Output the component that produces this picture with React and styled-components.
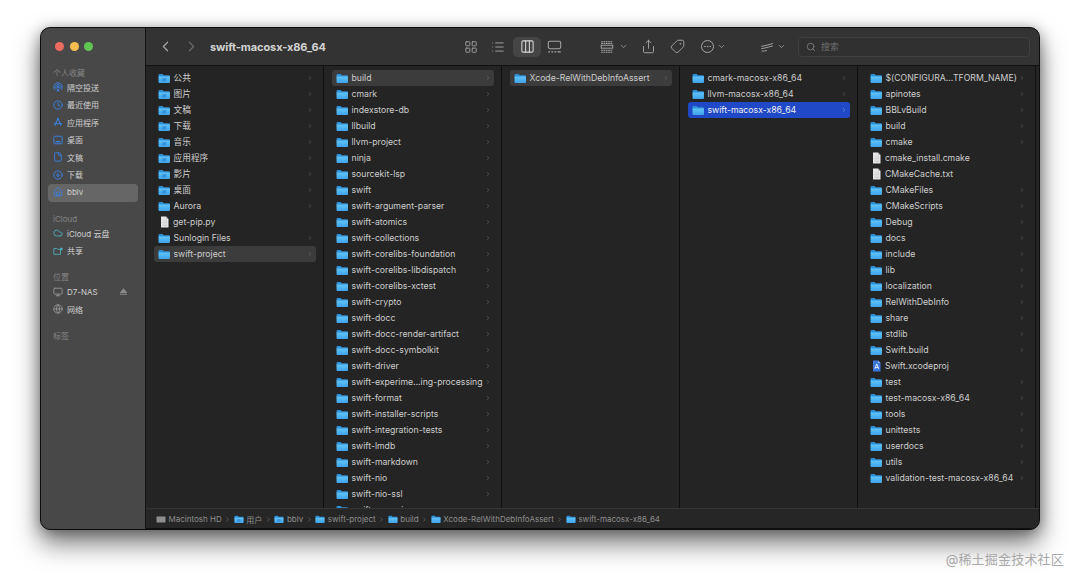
import React from "react";
import styled, { createGlobalStyle } from "styled-components";
import {
  ChevronLeft,
  ChevronRight,
  ChevronDown,
  Clock,
  File as FileIcon,
  CircleArrowDown,
  House,
  Cloud,
  Monitor,
  Globe,
  LayoutGrid,
  List,
  Columns3,
  Share,
  Tag,
  Ellipsis,
  Search,
} from "lucide-react";

const GlobalStyle = createGlobalStyle`
  html, body {
    margin: 0;
    padding: 0;
    background: #fff;
    overflow: hidden;
  }
  * { box-sizing: border-box; }
`;

const FONT = `Inter, "Noto Sans CJK SC", sans-serif`;

const Page = styled.div`
  width: 1080px;
  height: 583px;
  padding: 27px 0 0 40px;
  display: flex;
  flex-direction: column;
  background: #fff;
  font-family: ${FONT};
`;

const Window = styled.div`
  width: 1000px;
  height: 503px;
  flex: none;
  display: flex;
  border-radius: 10px;
  border: 1px solid #0d0d0d;
  overflow: hidden;
  background: #242424;
  box-shadow: 0 14px 26px rgba(0, 0, 0, 0.5), 0 2px 14px rgba(0, 0, 0, 0.35);
`;

const Watermark = styled.div`
  align-self: flex-end;
  margin: 21px 16px 0 0;
  font-size: 13px;
  line-height: 16px;
  letter-spacing: 0.2px;
  color: #a9a9a9;
  white-space: nowrap;
`;

const Sidebar = styled.aside`
  width: 105px;
  flex: none;
  background: #484848;
  border-right: 1px solid #141414;
`;

const Lights = styled.div`
  height: 39.5px;
  padding: 13.5px 0 0 14px;
  display: flex;
  gap: 5.5px;
`;

const Light = styled.span`
  width: 9px;
  height: 9px;
  border-radius: 50%;
  background: ${(p) => p.$color};
`;

const Section = styled.section`
  margin-bottom: 12px;
`;

const SectionTitle = styled.div`
  height: 11.5px;
  padding-left: 12px;
  font-size: 8px;
  line-height: 10px;
  color: #858585;
`;

const SideItem = styled.div`
  height: 17.5px;
  margin: 0 7px;
  padding: 0 5px 1px 5px;
  display: flex;
  align-items: center;
  gap: 4px;
  font-size: 8px;
  color: #d0d0d0;
  border-radius: 4px;
  background: ${(p) => (p.$active ? "#666666" : "transparent")};
  svg {
    width: 10px;
    height: 10px;
    flex: none;
    color: ${(p) => p.$iconColor || "#3a82e6"};
  }
`;

const Eject = styled.span`
  margin-left: auto;
  margin-right: 6px;
  width: 7px;
  height: 7px;
  flex: none;
  background: #8a8a8a;
  clip-path: polygon(50% 0, 100% 62%, 100% 72%, 0 72%, 0 62%, 0 100%, 100% 100%, 100% 84%, 0 84%, 0 62%);
`;

const Main = styled.div`
  flex: 1;
  min-width: 0;
  display: flex;
  flex-direction: column;
`;

const Toolbar = styled.header`
  height: 38px;
  flex: none;
  display: flex;
  align-items: center;
  background: #333333;
  border-bottom: 1px solid #111;
  color: #a6a6a6;
`;

const Slot = styled.div`
  width: ${(p) => p.$w}px;
  height: 20px;
  margin-left: ${(p) => p.$ml || 0}px;
  flex: none;
  display: flex;
  align-items: center;
  justify-content: center;
  gap: ${(p) => p.$gap || 0}px;
  border-radius: 5px;
  color: ${(p) => (p.$dim ? "#6a6a6a" : "#a6a6a6")};
  background: ${(p) => (p.$active ? "#454545" : "transparent")};
`;

const Title = styled.div`
  width: 246px;
  margin-left: 6px;
  flex: none;
  font-size: 11px;
  font-weight: 700;
  color: #d2d2d2;
  letter-spacing: -0.1px;
  white-space: nowrap;
`;

const TagIcon = styled(Tag)`
  transform: rotate(90deg);
`;

const MoreRing = styled.span`
  width: 13px;
  height: 13px;
  display: flex;
  align-items: center;
  justify-content: center;
  border: 1.2px solid currentColor;
  border-radius: 50%;
`;

const SearchBox = styled.div`
  width: 232px;
  height: 20px;
  margin-left: 8px;
  padding-left: 7px;
  flex: none;
  display: flex;
  align-items: center;
  gap: 5px;
  font-size: 9px;
  color: #6f6f6f;
  border: 1px solid #3f3f3f;
  border-radius: 4px;
  background: #303030;
`;

const Browser = styled.div`
  flex: 1;
  min-height: 0;
  display: flex;
  overflow: hidden;
  background: #242424;
`;

const Column = styled.div`
  width: 178px;
  flex: none;
  padding: 4px 7px 0 8px;
  overflow: hidden;
  border-right: 1px solid #0f0f0f;
`;

const Row = styled.div`
  height: 16px;
  padding: 0 3.5px 0 4px;
  display: flex;
  align-items: center;
  gap: 3px;
  font-size: 8.7px;
  color: ${(p) => (p.$state === "blue" ? "#f0f0f0" : "#cdcdcd")};
  border-radius: 3px;
  white-space: nowrap;
  background: ${(p) =>
    p.$state === "blue" ? "#1f49c7" : p.$state === "gray" ? "#3c3c3c" : "transparent"};
`;

const RowName = styled.span`
  flex: 1;
  min-width: 0;
  margin-top: ${(p) => (p.$cjk ? "-1px" : "0")};
`;

const RowArrow = styled.span`
  width: 6px;
  display: flex;
  justify-content: center;
  flex: none;
  color: ${(p) => (p.$light ? "#c4cdea" : "#858585")};
`;

const StatusBar = styled.footer`
  height: 21px;
  flex: none;
  padding-left: 10px;
  display: flex;
  align-items: center;
  background: #262626;
  border-top: 1px solid #343434;
  box-shadow: inset 0 -1px 0 #0f0f0f;
`;

const Crumb = styled.span`
  display: flex;
  align-items: center;
  gap: 2.5px;
  font-size: 8px;
  color: #8e8e8e;
  white-space: nowrap;
`;

const CrumbSep = styled.span`
  width: 12.1px;
  display: flex;
  justify-content: center;
  color: #7c7c7c;
`;

const Defs = styled.svg`
  position: absolute;
  width: 0;
  height: 0;
`;

const FolderSvg = styled.svg`
  flex: none;
`;

const DocSvg = styled.svg`
  flex: none;
  margin-left: 1px;
`;

function Folder({ size = 12.5, glyph }) {
  return (
    <FolderSvg width={size} height={size * 0.84} viewBox="0 0 24 20">
      <path d="M1 4.5C1 2.8 2 2 3.5 2H9l2 2h9.5C22 4 23 5 23 6.5V8H1z" fill="#2f90da" />
      <path d="M1 6.5h22v10.7c0 1.3-1 2.3-2.3 2.3H3.3C2 19.5 1 18.5 1 17.2z" fill="url(#folderFill)" />
      {glyph && <rect x="8" y="10" width="8" height="6" rx="1" fill="#3592d8" />}
    </FolderSvg>
  );
}

function Doc({ blue }) {
  return (
    <DocSvg width="11" height="12" viewBox="0 0 20 24">
      <path d="M3 1h10l5 5v17H3z" fill={blue ? "#3b76dc" : "#e6e6e6"} />
      <path d="M13 1v5h5z" fill={blue ? "#8fb4f0" : "#b5b5b5"} />
      {blue ? (
        <path d="M10.5 8l-4 10M10.5 8l4 10M7.5 15h6" stroke="#fff" strokeWidth="1.6" fill="none" />
      ) : (
        <path d="M6 10h9M6 13h9M6 16h9M6 19h9" stroke="#bcbcbc" strokeWidth="1" />
      )}
    </DocSvg>
  );
}

function AirDrop() {
  return (
    <svg viewBox="0 0 24 24" fill="none" stroke="currentColor" strokeWidth="2.4">
      <path d="M5 19a10 10 0 1 1 14 0" />
      <path d="M8.5 16a5.5 5.5 0 1 1 7 0" />
      <circle cx="12" cy="12" r="1.8" fill="currentColor" />
      <path d="M12 15l-4 7h8z" fill="currentColor" stroke="none" />
    </svg>
  );
}

function AppsIcon() {
  return (
    <svg viewBox="0 0 24 24" fill="none" stroke="currentColor" strokeWidth="2.6" strokeLinecap="round">
      <path d="M12 3l-7 17M12 3l7 17M3 16h18" />
    </svg>
  );
}

function DesktopIcon() {
  return (
    <svg viewBox="0 0 24 24" fill="none" stroke="currentColor" strokeWidth="2.2">
      <rect x="2" y="3" width="20" height="18" rx="2" />
      <path d="M6 16h12" strokeWidth="3" />
    </svg>
  );
}

function SharedIcon() {
  return (
    <svg viewBox="0 0 24 24" fill="none" stroke="currentColor" strokeWidth="2">
      <path d="M2 6h7l2 2h7v12H2z" />
      <circle cx="20" cy="7" r="2.5" fill="currentColor" />
    </svg>
  );
}

function GalleryIcon() {
  return (
    <svg width="15" height="13" viewBox="0 0 24 21" fill="none" stroke="currentColor" strokeWidth="1.7">
      <rect x="2" y="2" width="20" height="12" rx="2.5" />
      <path d="M2 19h3M7 19h3M12 19h3M17 19h5" strokeWidth="2" />
    </svg>
  );
}

function GroupIcon() {
  return (
    <svg width="14" height="14" viewBox="0 0 24 24" fill="none" stroke="currentColor" strokeWidth="1.6">
      <path d="M2 3h20M2 6h20" strokeDasharray="3 1" strokeWidth="2" />
      <rect x="2" y="9" width="20" height="5" />
      <path d="M2 17.5h20M2 21h20" strokeDasharray="3 1" strokeWidth="2" />
    </svg>
  );
}

function SwooshIcon() {
  return (
    <svg width="14" height="10" viewBox="0 0 24 16" fill="none" stroke="currentColor" strokeWidth="1.6">
      <path d="M2 7c6-1 14-3 20-5" />
      <path d="M2 11c6-1 14-3 20-5" />
      <path d="M12 14c-3 1-6 1-9 1" />
    </svg>
  );
}

const favorites = [
  { label: "隔空投送", Icon: AirDrop },
  { label: "最近使用", Icon: Clock },
  { label: "应用程序", Icon: AppsIcon },
  { label: "桌面", Icon: DesktopIcon },
  { label: "文稿", Icon: FileIcon },
  { label: "下载", Icon: CircleArrowDown },
  { label: "bblv", Icon: House, active: true },
];

const columns = [
  [
    { n: "公共", g: 1 },
    { n: "图片", g: 1 },
    { n: "文稿", g: 1 },
    { n: "下载", g: 1 },
    { n: "音乐", g: 1 },
    { n: "应用程序", g: 1 },
    { n: "影片", g: 1 },
    { n: "桌面", g: 1 },
    { n: "Aurora" },
    { n: "get-pip.py", doc: 1 },
    { n: "Sunlogin Files" },
    { n: "swift-project", s: "gray" },
  ],
  [
    { n: "build", s: "gray" },
    ..."cmark,indexstore-db,llbuild,llvm-project,ninja,sourcekit-lsp,swift,swift-argument-parser,swift-atomics,swift-collections,swift-corelibs-foundation,swift-corelibs-libdispatch,swift-corelibs-xctest,swift-crypto,swift-docc,swift-docc-render-artifact,swift-docc-symbolkit,swift-driver,swift-experime...ing-processing,swift-format,swift-installer-scripts,swift-integration-tests,swift-lmdb,swift-markdown,swift-nio,swift-nio-ssl,swift-numerics"
      .split(",")
      .map((n) => ({ n })),
  ],
  [{ n: "Xcode-RelWithDebInfoAssert", s: "gray" }],
  [
    { n: "cmark-macosx-x86_64" },
    { n: "llvm-macosx-x86_64" },
    { n: "swift-macosx-x86_64", s: "blue" },
  ],
  [
    { n: "$(CONFIGURA...TFORM_NAME)" },
    { n: "apinotes" },
    { n: "BBLvBuild" },
    { n: "build" },
    { n: "cmake" },
    { n: "cmake_install.cmake", doc: 1 },
    { n: "CMakeCache.txt", doc: 1 },
    { n: "CMakeFiles" },
    { n: "CMakeScripts" },
    { n: "Debug" },
    { n: "docs" },
    { n: "include" },
    { n: "lib" },
    { n: "localization" },
    { n: "RelWithDebInfo" },
    { n: "share" },
    { n: "stdlib" },
    { n: "Swift.build" },
    { n: "Swift.xcodeproj", doc: 2 },
    { n: "test" },
    { n: "test-macosx-x86_64" },
    { n: "tools" },
    { n: "unittests" },
    { n: "userdocs" },
    { n: "utils" },
    { n: "validation-test-macosx-x86_64" },
  ],
];

const crumbs = [
  { n: "用户", g: 1 },
  { n: "bblv", g: 1 },
  { n: "swift-project" },
  { n: "build" },
  { n: "Xcode-RelWithDebInfoAssert" },
  { n: "swift-macosx-x86_64" },
];

function App() {
  return (
    <Page>
      <GlobalStyle />
      <Defs>
        <defs>
          <linearGradient id="folderFill" x1="0" y1="0" x2="0" y2="1">
            <stop offset="0" stopColor="#62c4f8" />
            <stop offset="1" stopColor="#3da2ea" />
          </linearGradient>
        </defs>
      </Defs>
      <Window>
        <Sidebar>
          <Lights>
            <Light $color="#ed6a5e" />
            <Light $color="#f4bf4f" />
            <Light $color="#61c554" />
          </Lights>
          <Section>
            <SectionTitle>个人收藏</SectionTitle>
            {favorites.map(({ label, Icon, active }) => (
              <SideItem key={label} $active={active}>
                <Icon strokeWidth={2.2} />
                {label}
              </SideItem>
            ))}
          </Section>
          <Section>
            <SectionTitle>iCloud</SectionTitle>
            <SideItem $iconColor="#4fb3c4">
              <Cloud strokeWidth={2} />
              iCloud 云盘
            </SideItem>
            <SideItem $iconColor="#4fb3c4">
              <SharedIcon />
              共享
            </SideItem>
          </Section>
          <Section>
            <SectionTitle>位置</SectionTitle>
            <SideItem $iconColor="#9a9a9a">
              <Monitor strokeWidth={2} />
              D7-NAS
              <Eject />
            </SideItem>
            <SideItem $iconColor="#9a9a9a">
              <Globe strokeWidth={2} />
              网络
            </SideItem>
          </Section>
          <Section>
            <SectionTitle>标签</SectionTitle>
          </Section>
        </Sidebar>
        <Main>
          <Toolbar>
            <Slot $w={26} $ml={6}>
              <ChevronLeft size={17} strokeWidth={1.7} />
            </Slot>
            <Slot $w={26} $dim>
              <ChevronRight size={17} strokeWidth={1.7} />
            </Slot>
            <Title>swift-macosx-x86_64</Title>
            <Slot $w={27} $ml={1}>
              <LayoutGrid size={14} strokeWidth={1.5} />
            </Slot>
            <Slot $w={27}>
              <List size={14} strokeWidth={1.6} />
            </Slot>
            <Slot $w={28} $ml={2} $active>
              <Columns3 size={15} strokeWidth={1.7} color="#d6d6d6" />
            </Slot>
            <Slot $w={27}>
              <GalleryIcon />
            </Slot>
            <Slot $w={32} $ml={30} $gap={5}>
              <GroupIcon />
              <ChevronDown size={9} strokeWidth={2} />
            </Slot>
            <Slot $w={26} $ml={5}>
              <Share size={15} strokeWidth={1.5} />
            </Slot>
            <Slot $w={26} $ml={3}>
              <TagIcon size={15} strokeWidth={1.5} />
            </Slot>
            <Slot $w={32} $ml={7} $gap={3}>
              <MoreRing>
                <Ellipsis size={9} strokeWidth={2} />
              </MoreRing>
              <ChevronDown size={9} strokeWidth={2} />
            </Slot>
            <Slot $w={34} $ml={27} $gap={3}>
              <SwooshIcon />
              <ChevronDown size={9} strokeWidth={2} />
            </Slot>
            <SearchBox>
              <Search size={10} strokeWidth={1.8} color="#8a8a8a" />
              搜索
            </SearchBox>
          </Toolbar>
          <Browser>
            {columns.map((rows, i) => (
              <Column key={i}>
                {rows.map((r) => (
                  <Row key={r.n} $state={r.s}>
                    {r.doc ? <Doc blue={r.doc === 2} /> : <Folder glyph={r.g} />}
                    <RowName $cjk={r.g}>{r.n}</RowName>
                    {!r.doc && (
                      <RowArrow $light={r.s === "blue"}>
                        <ChevronRight size={8} strokeWidth={1.7} />
                      </RowArrow>
                    )}
                  </Row>
                ))}
              </Column>
            ))}
          </Browser>
          <StatusBar>
            <Crumb>
              <svg width="10" height="9" viewBox="0 0 20 18">
                <rect x="1" y="3" width="18" height="12" rx="1.5" fill="#8e8e8e" />
              </svg>
              Macintosh HD
            </Crumb>
            {crumbs.map((c) => (
              <React.Fragment key={c.n}>
                <CrumbSep>
                  <ChevronRight size={7} strokeWidth={1.8} />
                </CrumbSep>
                <Crumb>
                  <Folder size={10} glyph={c.g} />
                  {c.n}
                </Crumb>
              </React.Fragment>
            ))}
          </StatusBar>
        </Main>
      </Window>
      <Watermark>@稀土掘金技术社区</Watermark>
    </Page>
  );
}

export default App;
